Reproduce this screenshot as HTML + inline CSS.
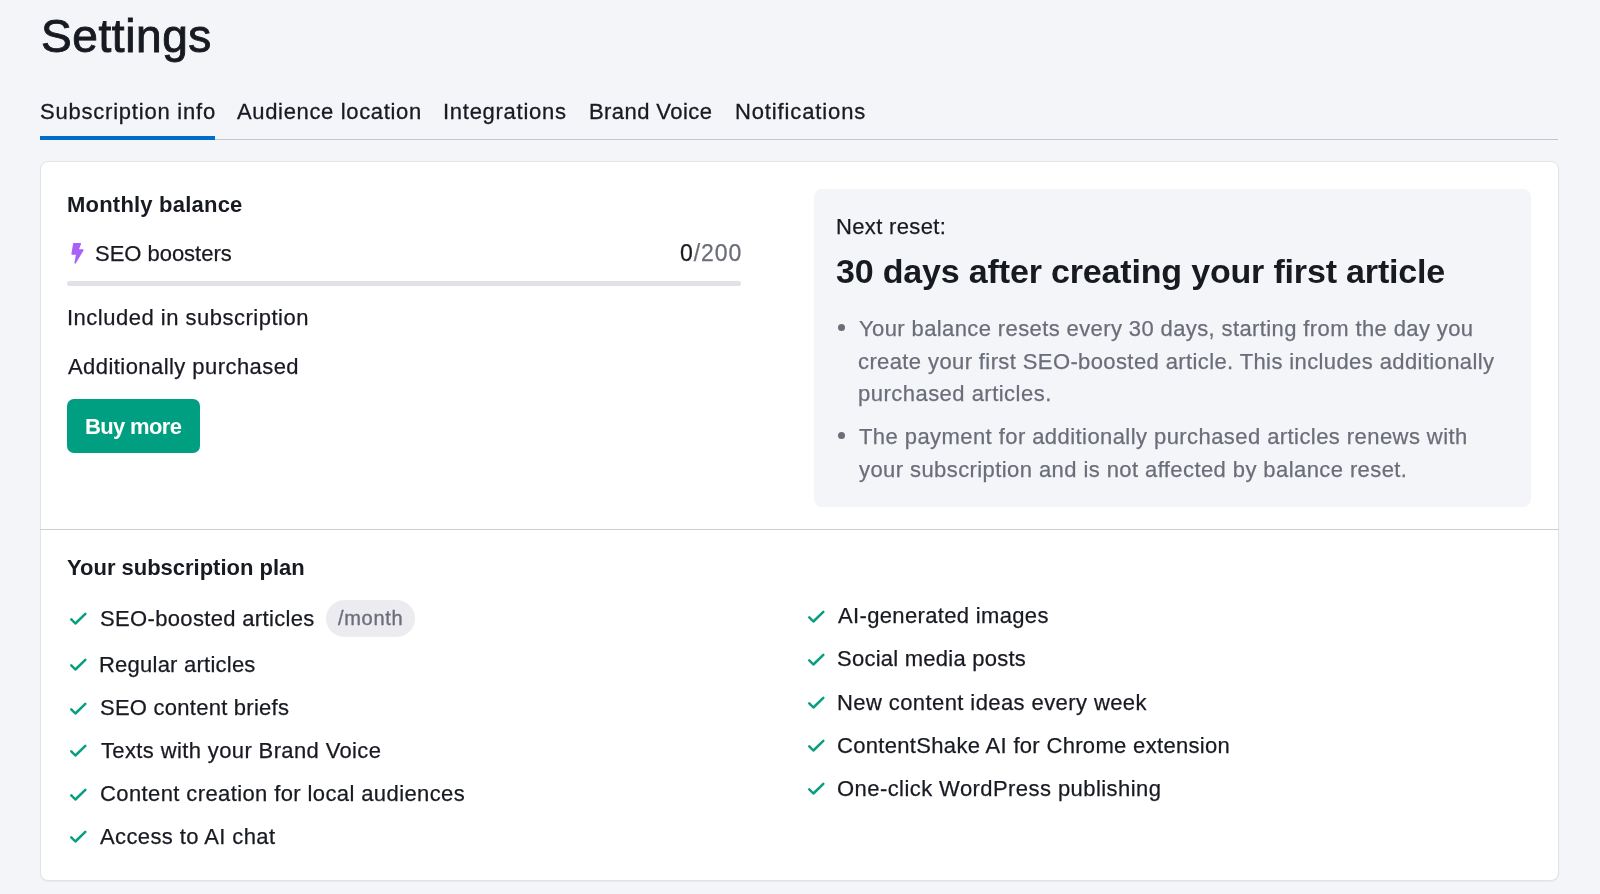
<!DOCTYPE html>
<html>
<head>
<meta charset="utf-8">
<style>
*{box-sizing:border-box;margin:0;padding:0}
html,body{width:1600px;height:894px;overflow:hidden}
body{background:#f4f5f9;font-family:"Liberation Sans",sans-serif;color:#181a22;position:relative}
.tx{position:absolute;white-space:nowrap;will-change:transform}
.tabs{position:absolute;left:40px;top:139px;width:1518px;height:1px;background:#c2c5cd}
.tabline{position:absolute;left:40px;top:136px;width:175px;height:4px;background:#006dca}
.card{position:absolute;left:40px;top:161px;width:1519px;height:720px;background:#fff;border:1px solid #e2e3e9;border-radius:8px;box-shadow:0 1px 1px rgba(30,35,60,.05)}
.divider{position:absolute;left:40px;top:529px;width:1519px;height:1px;background:#ccced6}
.bar{position:absolute;left:67px;top:281px;width:674px;height:5px;background:#e0e1e9;border-radius:3px}
.btn{position:absolute;left:67px;top:399px;width:133px;height:54px;background:#009f81;border-radius:7px}
.panel{position:absolute;left:814px;top:189px;width:717px;height:318px;background:#f4f5f9;border-radius:8px}
.dot{position:absolute;width:7px;height:7px;border-radius:50%;background:#6b6d79}
.chk{position:absolute}
.pill{position:absolute;left:325.5px;top:600px;width:89px;height:37px;border-radius:18.5px;background:#ebebf0}
.bolt{position:absolute;left:71px;top:242px}
</style>
</head>
<body>
<div class="tabs"></div>
<div class="tabline"></div>
<div class="card"></div>
<div class="divider"></div>
<div class="bar"></div>
<div class="btn"></div>
<div class="panel"></div>
<div class="pill"></div>
<div class="dot" style="left:838px;top:324px"></div>
<div class="dot" style="left:838px;top:432px"></div>
<svg class="bolt" width="14" height="23" viewBox="0 0 14 23"><path d="M2.9 1.7H9.3L6.9 8H11.8L4.2 20.8 5.9 12H1.2Z" fill="#a862f8" stroke="#a862f8" stroke-width="1.6" stroke-linejoin="round"/></svg>
<svg class="chk" style="left:69px;top:612px" width="18" height="14" viewBox="0 0 18 14"><path d="M2.3 7.3L6.4 11.5 16.3 1.8" fill="none" stroke="#0a9e80" stroke-width="2.5" stroke-linecap="round" stroke-linejoin="round"/></svg>
<svg class="chk" style="left:69px;top:658px" width="18" height="14" viewBox="0 0 18 14"><path d="M2.3 7.3L6.4 11.5 16.3 1.8" fill="none" stroke="#0a9e80" stroke-width="2.5" stroke-linecap="round" stroke-linejoin="round"/></svg>
<svg class="chk" style="left:69px;top:702px" width="18" height="14" viewBox="0 0 18 14"><path d="M2.3 7.3L6.4 11.5 16.3 1.8" fill="none" stroke="#0a9e80" stroke-width="2.5" stroke-linecap="round" stroke-linejoin="round"/></svg>
<svg class="chk" style="left:69px;top:744px" width="18" height="14" viewBox="0 0 18 14"><path d="M2.3 7.3L6.4 11.5 16.3 1.8" fill="none" stroke="#0a9e80" stroke-width="2.5" stroke-linecap="round" stroke-linejoin="round"/></svg>
<svg class="chk" style="left:69px;top:788px" width="18" height="14" viewBox="0 0 18 14"><path d="M2.3 7.3L6.4 11.5 16.3 1.8" fill="none" stroke="#0a9e80" stroke-width="2.5" stroke-linecap="round" stroke-linejoin="round"/></svg>
<svg class="chk" style="left:69px;top:830px" width="18" height="14" viewBox="0 0 18 14"><path d="M2.3 7.3L6.4 11.5 16.3 1.8" fill="none" stroke="#0a9e80" stroke-width="2.5" stroke-linecap="round" stroke-linejoin="round"/></svg>
<svg class="chk" style="left:807px;top:610px" width="18" height="14" viewBox="0 0 18 14"><path d="M2.3 7.3L6.4 11.5 16.3 1.8" fill="none" stroke="#0a9e80" stroke-width="2.5" stroke-linecap="round" stroke-linejoin="round"/></svg>
<svg class="chk" style="left:807px;top:653px" width="18" height="14" viewBox="0 0 18 14"><path d="M2.3 7.3L6.4 11.5 16.3 1.8" fill="none" stroke="#0a9e80" stroke-width="2.5" stroke-linecap="round" stroke-linejoin="round"/></svg>
<svg class="chk" style="left:807px;top:696px" width="18" height="14" viewBox="0 0 18 14"><path d="M2.3 7.3L6.4 11.5 16.3 1.8" fill="none" stroke="#0a9e80" stroke-width="2.5" stroke-linecap="round" stroke-linejoin="round"/></svg>
<svg class="chk" style="left:807px;top:739px" width="18" height="14" viewBox="0 0 18 14"><path d="M2.3 7.3L6.4 11.5 16.3 1.8" fill="none" stroke="#0a9e80" stroke-width="2.5" stroke-linecap="round" stroke-linejoin="round"/></svg>
<svg class="chk" style="left:807px;top:782px" width="18" height="14" viewBox="0 0 18 14"><path d="M2.3 7.3L6.4 11.5 16.3 1.8" fill="none" stroke="#0a9e80" stroke-width="2.5" stroke-linecap="round" stroke-linejoin="round"/></svg>
<div id="title" class="tx" style="left:40.60px;top:9.00px;font-size:46px;font-weight:400;color:#181a22;letter-spacing:0.587px;line-height:55px;-webkit-text-stroke-width:0.9px">Settings</div>
<div id="tab1" class="tx" style="left:40.00px;top:99.00px;font-size:22px;font-weight:400;color:#181a22;letter-spacing:0.781px;line-height:26px;-webkit-text-stroke-width:0.3px">Subscription info</div>
<div id="tab2" class="tx" style="left:237.00px;top:99.00px;font-size:22px;font-weight:400;color:#181a22;letter-spacing:0.657px;line-height:26px;-webkit-text-stroke-width:0.3px">Audience location</div>
<div id="tab3" class="tx" style="left:443.00px;top:99.00px;font-size:22px;font-weight:400;color:#181a22;letter-spacing:0.727px;line-height:26px;-webkit-text-stroke-width:0.3px">Integrations</div>
<div id="tab4" class="tx" style="left:589.00px;top:99.00px;font-size:22px;font-weight:400;color:#181a22;letter-spacing:0.425px;line-height:26px;-webkit-text-stroke-width:0.3px">Brand Voice</div>
<div id="tab5" class="tx" style="left:735.00px;top:99.00px;font-size:22px;font-weight:400;color:#181a22;letter-spacing:0.875px;line-height:26px;-webkit-text-stroke-width:0.3px">Notifications</div>
<div id="mb" class="tx" style="left:67.00px;top:191.91px;font-size:22px;font-weight:700;color:#181a22;letter-spacing:0.212px;line-height:26px">Monthly balance</div>
<div id="seob" class="tx" style="left:94.80px;top:240.71px;font-size:22px;font-weight:400;color:#181a22;letter-spacing:-0.025px;line-height:26px;-webkit-text-stroke-width:0.25px">SEO boosters</div>
<div id="cnt" class="tx" style="left:679.60px;top:238.80px;font-size:23px;font-weight:400;color:#181a22;letter-spacing:0.900px;line-height:28px;-webkit-text-stroke-width:0.25px">0<span style="color:#6b6d79">/200</span></div>
<div id="inc" class="tx" style="left:66.80px;top:305.41px;font-size:22px;font-weight:400;color:#181a22;letter-spacing:0.499px;line-height:26px;-webkit-text-stroke-width:0.25px">Included in subscription</div>
<div id="add" class="tx" style="left:67.50px;top:353.91px;font-size:22px;font-weight:400;color:#181a22;letter-spacing:0.440px;line-height:26px;-webkit-text-stroke-width:0.25px">Additionally purchased</div>
<div id="buy" class="tx" style="left:84.80px;top:413.61px;font-size:22px;font-weight:700;color:#ffffff;letter-spacing:-0.643px;line-height:26px">Buy more</div>
<div id="nr" class="tx" style="left:836.40px;top:213.71px;font-size:22px;font-weight:400;color:#181a22;letter-spacing:0.340px;line-height:26px;-webkit-text-stroke-width:0.25px">Next reset:</div>
<div id="big" class="tx" style="left:836.40px;top:251.41px;font-size:34px;font-weight:700;color:#181a22;letter-spacing:-0.170px;line-height:41px">30 days after creating your first article</div>
<div id="b1" class="tx" style="left:859.40px;top:316.30px;font-size:22px;font-weight:400;color:#6b6d79;letter-spacing:0.390px;line-height:26px;-webkit-text-stroke-width:0.25px">Your balance resets every 30 days, starting from the day you</div>
<div id="b2" class="tx" style="left:858.00px;top:348.71px;font-size:22px;font-weight:400;color:#6b6d79;letter-spacing:0.391px;line-height:26px;-webkit-text-stroke-width:0.25px">create your first SEO-boosted article. This includes additionally</div>
<div id="b3" class="tx" style="left:858.00px;top:380.61px;font-size:22px;font-weight:400;color:#6b6d79;letter-spacing:0.478px;line-height:26px;-webkit-text-stroke-width:0.25px">purchased articles.</div>
<div id="b4" class="tx" style="left:859.40px;top:424.01px;font-size:22px;font-weight:400;color:#6b6d79;letter-spacing:0.431px;line-height:26px;-webkit-text-stroke-width:0.25px">The payment for additionally purchased articles renews with</div>
<div id="b5" class="tx" style="left:859.00px;top:456.51px;font-size:22px;font-weight:400;color:#6b6d79;letter-spacing:0.417px;line-height:26px;-webkit-text-stroke-width:0.25px">your subscription and is not affected by balance reset.</div>
<div id="ysp" class="tx" style="left:67.00px;top:554.71px;font-size:22px;font-weight:700;color:#181a22;letter-spacing:-0.013px;line-height:26px">Your subscription plan</div>
<div id="mon" class="tx" style="left:338.20px;top:605.81px;font-size:20px;font-weight:400;color:#6b6d79;letter-spacing:0.700px;line-height:24px;-webkit-text-stroke-width:0.35px">/month</div>
<div id="l1" class="tx" style="left:100.20px;top:605.61px;font-size:22px;font-weight:400;color:#181a22;letter-spacing:0.341px;line-height:26px;-webkit-text-stroke-width:0.25px">SEO-boosted articles</div>
<div id="l2" class="tx" style="left:99.40px;top:652.01px;font-size:22px;font-weight:400;color:#181a22;letter-spacing:0.234px;line-height:26px;-webkit-text-stroke-width:0.25px">Regular articles</div>
<div id="l3" class="tx" style="left:100.20px;top:695.01px;font-size:22px;font-weight:400;color:#181a22;letter-spacing:0.251px;line-height:26px;-webkit-text-stroke-width:0.25px">SEO content briefs</div>
<div id="l4" class="tx" style="left:100.80px;top:738.01px;font-size:22px;font-weight:400;color:#181a22;letter-spacing:0.374px;line-height:26px;-webkit-text-stroke-width:0.25px">Texts with your Brand Voice</div>
<div id="l5" class="tx" style="left:100.20px;top:781.01px;font-size:22px;font-weight:400;color:#181a22;letter-spacing:0.391px;line-height:26px;-webkit-text-stroke-width:0.25px">Content creation for local audiences</div>
<div id="l6" class="tx" style="left:100.40px;top:824.01px;font-size:22px;font-weight:400;color:#181a22;letter-spacing:0.393px;line-height:26px;-webkit-text-stroke-width:0.25px">Access to AI chat</div>
<div id="r1" class="tx" style="left:837.80px;top:603.30px;font-size:22px;font-weight:400;color:#181a22;letter-spacing:0.344px;line-height:26px;-webkit-text-stroke-width:0.25px">AI-generated images</div>
<div id="r2" class="tx" style="left:837.00px;top:646.41px;font-size:22px;font-weight:400;color:#181a22;letter-spacing:0.246px;line-height:26px;-webkit-text-stroke-width:0.25px">Social media posts</div>
<div id="r3" class="tx" style="left:837.40px;top:689.51px;font-size:22px;font-weight:400;color:#181a22;letter-spacing:0.412px;line-height:26px;-webkit-text-stroke-width:0.25px">New content ideas every week</div>
<div id="r4" class="tx" style="left:837.00px;top:732.61px;font-size:22px;font-weight:400;color:#181a22;letter-spacing:0.322px;line-height:26px;-webkit-text-stroke-width:0.25px">ContentShake AI for Chrome extension</div>
<div id="r5" class="tx" style="left:837.00px;top:775.71px;font-size:22px;font-weight:400;color:#181a22;letter-spacing:0.431px;line-height:26px;-webkit-text-stroke-width:0.25px">One-click WordPress publishing</div>
</body>
</html>
